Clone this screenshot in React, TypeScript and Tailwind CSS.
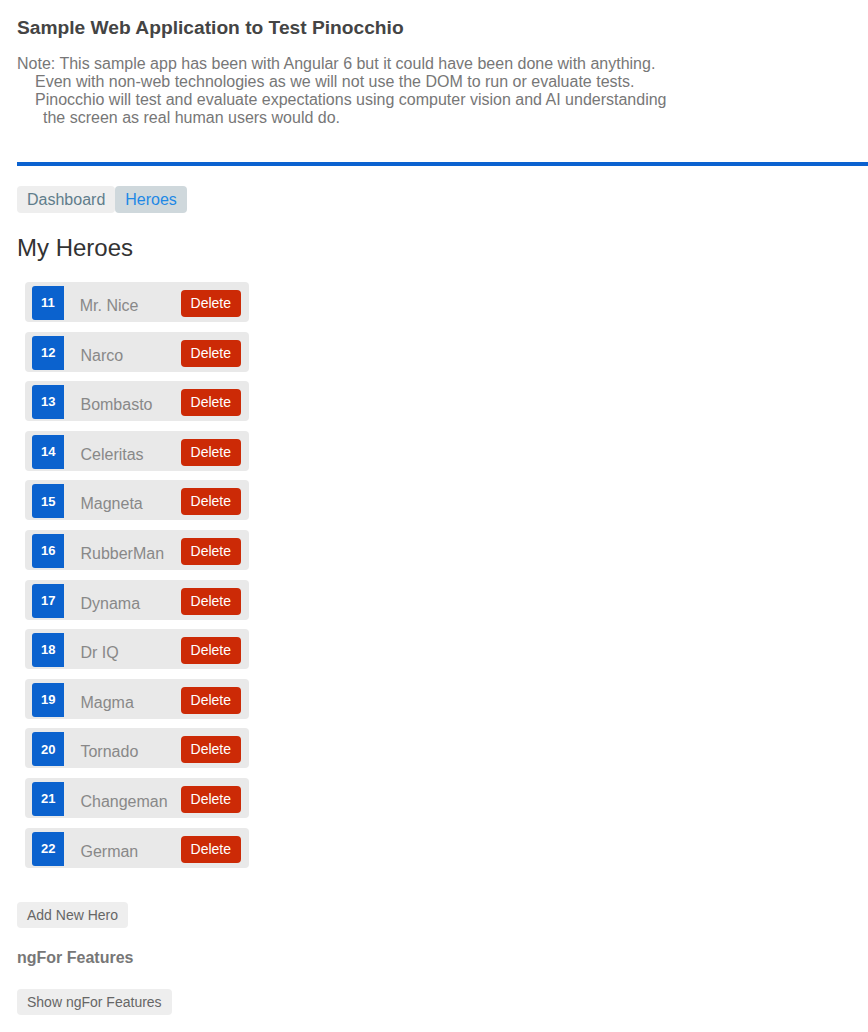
import { useState } from "react";

type Hero = {
    id: number;
    name: string;
};

const HEROES: Hero[] = [
    { id: 11, name: "Mr. Nice" },
    { id: 12, name: "Narco" },
    { id: 13, name: "Bombasto" },
    { id: 14, name: "Celeritas" },
    { id: 15, name: "Magneta" },
    { id: 16, name: "RubberMan" },
    { id: 17, name: "Dynama" },
    { id: 18, name: "Dr IQ" },
    { id: 19, name: "Magma" },
    { id: 20, name: "Tornado" },
    { id: 21, name: "Changeman" },
    { id: 22, name: "German" },
];

export default function App() {
    const [heroes, setHeroes] = useState<Hero[]>(HEROES);

    const remove = (id: number) => setHeroes(heroes.filter((h) => h.id !== id));

    return (
        <div className="min-h-[1032px] bg-white pl-[17px] pt-[16px] pb-[20px] font-['Liberation_Sans',Arial,sans-serif]">
            <h1 className="text-[19.2px] leading-[24px] font-bold text-[#444]">Sample Web Application to Test Pinocchio</h1>

            <div className="mt-[15px] text-[16px] leading-[18px] text-[#777]">
                <p>Note: This sample app has been with Angular 6 but it could have been done with anything.</p>
                <p className="pl-[18px]">Even with non-web technologies as we will not use the DOM to run or evaluate tests.</p>
                <p className="pl-[18px]">Pinocchio will test and evaluate expectations using computer vision and AI understanding</p>
                <p className="pl-[26px]">the screen as real human users would do.</p>
            </div>

            <div className="mt-[35px] h-[4px] bg-[#0b62d0]"></div>

            <nav className="mt-[20px] flex text-[16px] leading-[17px]">
                <a className="px-[10px] py-[5px] rounded-[4px] bg-[#eee] text-[#607d8b]">Dashboard</a>
                <a className="px-[10px] py-[5px] rounded-[4px] bg-[#cfd8dc] text-[#1e88e5]">Heroes</a>
            </nav>

            <h2 className="mt-[21px] text-[24px] leading-[28px] text-[#333]">My Heroes</h2>

            <ul className="mt-[20px] ml-[8px] w-[224px] flex flex-col gap-[9.6px]">
                {heroes.map((hero) => (
                    <li key={hero.id} className="h-[40px] flex items-start rounded-[4px] bg-[#e9e9e9]">
                        <span className="ml-[7px] mt-[4px] h-[34px] px-[9px] flex items-center rounded-l-[3px] bg-[#0b62ce] text-[13px] font-bold text-white">
                            {hero.id}
                        </span>
                        <span className="ml-[16px] mt-[15px] flex-1 text-[16px] leading-[18px] text-[#888]">{hero.name}</span>
                        <button
                            className="mr-[8px] mt-[8px] h-[27px] px-[10px] rounded-[4px] bg-[#cc2a06] text-[14px] text-white"
                            onClick={() => remove(hero.id)}
                        >
                            Delete
                        </button>
                    </li>
                ))}
            </ul>

            <button className="mt-[34px] block px-[10px] py-[5px] rounded-[4px] bg-[#eee] text-[14px] leading-[16px] text-[#666]">
                Add New Hero
            </button>

            <h4 className="mt-[21px] text-[16px] leading-[18px] font-bold text-[#777]">ngFor Features</h4>

            <button className="mt-[22px] block px-[10px] py-[5px] rounded-[4px] bg-[#eee] text-[14px] leading-[16px] text-[#666]">
                Show ngFor Features
            </button>
        </div>
    );
}
